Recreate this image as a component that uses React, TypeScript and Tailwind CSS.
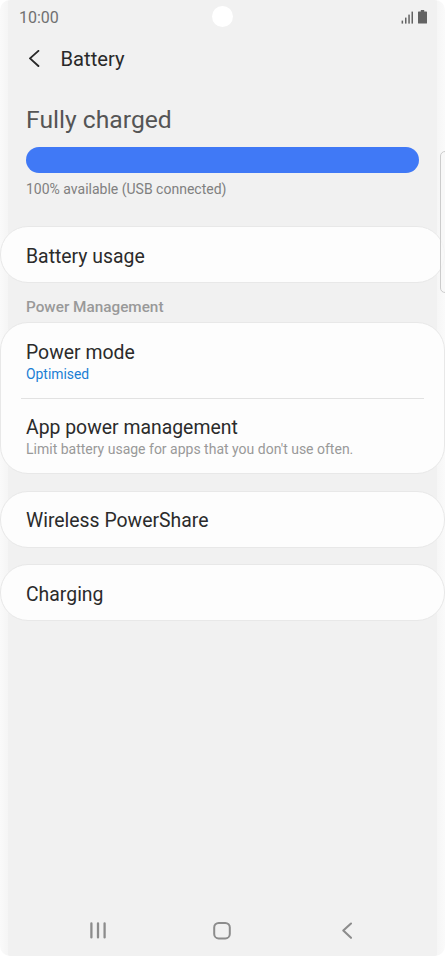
import React from 'react'

const StatusBar = () => {
  return (
    <div className='relative flex h-[34px] items-center justify-between pl-[19px] pr-[18px]'>
        <span className='pt-[2px] text-[16px] leading-5 text-[#707070]'>10:00</span>
        <div className='absolute left-[212px] top-[6px] h-[21px] w-[21px] rounded-full bg-white'></div>
        <div className='flex items-center gap-[5px] text-[#636363]'>
            <svg className='h-[13px] w-[12px]' viewBox='0 0 12 13' fill='currentColor'>
                <rect x='0.6' y='9.6' width='1.5' height='3' />
                <rect x='4' y='6.6' width='1.5' height='6' />
                <rect x='7.3' y='3.6' width='1.5' height='9' />
                <rect x='10.5' y='0.6' width='1.5' height='12' />
            </svg>
            <svg className='h-[14px] w-[9px]' viewBox='0 0 9 14' fill='currentColor'>
                <path d='M2.8 0H6.2V1.6H8.4Q9 1.6 9 2.2V13Q9 13.6 8.4 13.6H0.6Q0 13.6 0 13V2.2Q0 1.6 0.6 1.6H2.8Z' />
            </svg>
        </div>
    </div>
  )
}

const Header = () => {
  return (
    <header className='flex h-[50px] items-center pl-[28px]'>
        <svg className='h-[18px] w-[12px]' viewBox='0 0 12 18' fill='none' stroke='#292929' strokeWidth='1.9' strokeLinecap='round' strokeLinejoin='round'>
            <path d='M10.4 0.9L2 8.4L10.4 16' />
        </svg>
        <h1 className='ml-[20.5px] text-[20.2px] text-[#292929]'>Battery</h1>
    </header>
  )
}

const Card = ({ children }: { children: React.ReactNode }) => {
  return (
    <div className='rounded-[28px] border border-[#e8e8e8] bg-[#fdfdfd] px-[25px]'>{children}</div>
  )
}

const NavBar = () => {
  return (
    <nav className='mt-auto flex h-[51px] items-center justify-between pl-[89px] pr-[92px] text-[#8c8c8c]'>
        <svg className='h-[18px] w-[18px]' viewBox='0 0 18 18' fill='none' stroke='currentColor' strokeWidth='2.3' strokeLinecap='round'>
            <path d='M2.4 1.4V15.4M9 1.4V15.4M15.6 1.4V15.4' />
        </svg>
        <svg className='mr-[4px] h-[18px] w-[18px]' viewBox='0 0 18 18' fill='none' stroke='currentColor' strokeWidth='2'>
            <rect x='1.2' y='1' width='15.6' height='15.4' rx='4.5' />
        </svg>
        <svg className='h-[18px] w-[12px]' viewBox='0 0 12 18' fill='none' stroke='currentColor' strokeWidth='2.1' strokeLinecap='round' strokeLinejoin='round'>
            <path d='M10 1.5L2.3 8.6L10 15.8' />
        </svg>
    </nav>
  )
}

const App = () => {
  return (
    <div className='h-[956px] w-[445px] bg-white font-[Roboto,sans-serif]'>
        <div className='relative flex h-full flex-col overflow-hidden rounded-[10px] bg-[linear-gradient(to_right,#fafafa_0px,#f5f5f5_8px,#f1f1f1_8.5px,#f1f1f1_437px,#f6f6f6_437.5px,#fafafa_445px)]'>
            <StatusBar />
            <Header />

            <section className='h-[142px] px-[26px] pt-[21px]'>
                <h2 className='text-[24.7px] leading-[30px] text-[#555555]'>Fully charged</h2>
                <div className='mt-[12px] h-[26px] rounded-full bg-[#4079f6]'></div>
                <p className='mt-[6px] text-[14px] leading-5 text-[#808080]'>100% available (USB connected)</p>
            </section>

            <Card>
                <h3 className='flex h-[55px] items-center pt-[4px] text-[19.4px] text-[#2b2b2b]'>Battery usage</h3>
            </Card>

            <p className='flex h-[39px] items-center pl-[26px] pt-[9px] text-[15.3px] font-medium text-[#999999]'>Power Management</p>

            <Card>
                <div className='h-[75px] pt-[18px]'>
                    <h3 className='text-[19.4px] leading-[23px] text-[#2b2b2b]'>Power mode</h3>
                    <p className='text-[13.9px] leading-5 text-[#1a7fd4]'>Optimised</p>
                </div>
                <div className='-mx-[5px] h-px bg-[#e2e2e2]'></div>
                <div className='h-[74px] pt-[17px]'>
                    <h3 className='text-[19.4px] leading-[23px] text-[#2b2b2b]'>App power management</h3>
                    <p className='text-[14px] leading-5 text-[#999999]'>Limit battery usage for apps that you don't use often.</p>
                </div>
            </Card>

            <div className='mt-[16.5px] flex flex-col gap-[16.5px]'>
                <Card>
                    <h3 className='flex h-[55px] items-center pt-[3px] text-[19.4px] text-[#2b2b2b]'>Wireless PowerShare</h3>
                </Card>
                <Card>
                    <h3 className='flex h-[55px] items-center pt-[5px] text-[19.4px] text-[#2b2b2b]'>Charging</h3>
                </Card>
            </div>

            <NavBar />

            {/* edge panel handle */}
            <div className='absolute left-[440px] top-[151px] h-[142px] w-[10px] rounded-[6px] border border-[#cccccc] bg-[#f8f8f8]/80'></div>
        </div>
    </div>
  )
}

export default App
